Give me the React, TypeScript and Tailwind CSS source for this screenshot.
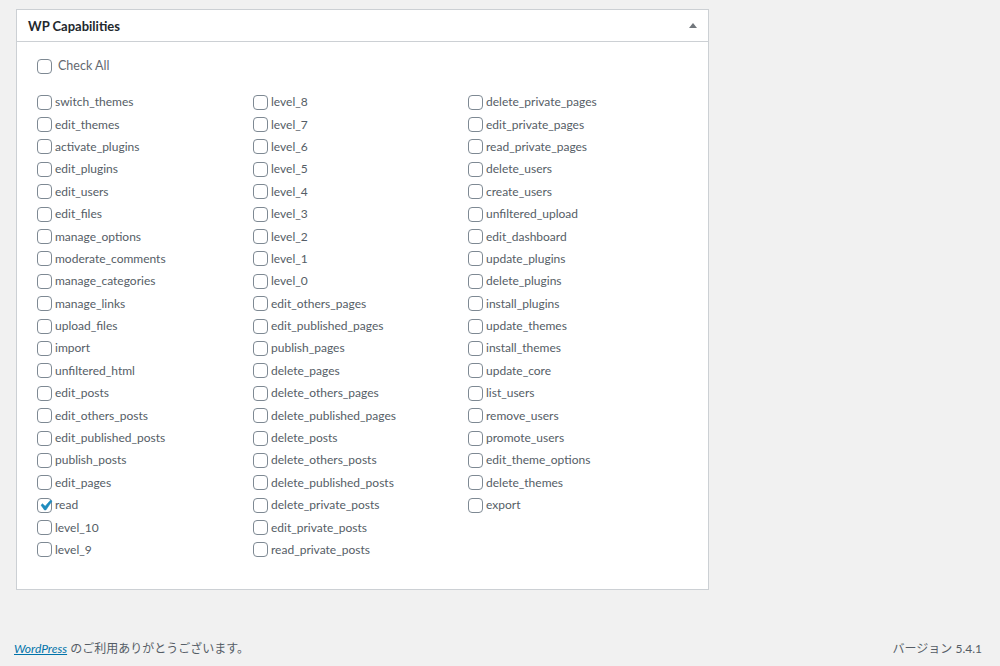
import { useState } from 'react';

const columns: string[][] = [
  [
    'switch_themes', 'edit_themes', 'activate_plugins', 'edit_plugins', 'edit_users', 'edit_files',
    'manage_options', 'moderate_comments', 'manage_categories', 'manage_links', 'upload_files', 'import',
    'unfiltered_html', 'edit_posts', 'edit_others_posts', 'edit_published_posts', 'publish_posts',
    'edit_pages', 'read', 'level_10', 'level_9',
  ],
  [
    'level_8', 'level_7', 'level_6', 'level_5', 'level_4', 'level_3', 'level_2', 'level_1', 'level_0',
    'edit_others_pages', 'edit_published_pages', 'publish_pages', 'delete_pages', 'delete_others_pages',
    'delete_published_pages', 'delete_posts', 'delete_others_posts', 'delete_published_posts',
    'delete_private_posts', 'edit_private_posts', 'read_private_posts',
  ],
  [
    'delete_private_pages', 'edit_private_pages', 'read_private_pages', 'delete_users', 'create_users',
    'unfiltered_upload', 'edit_dashboard', 'update_plugins', 'delete_plugins', 'install_plugins',
    'update_themes', 'install_themes', 'update_core', 'list_users', 'remove_users', 'promote_users',
    'edit_theme_options', 'delete_themes', 'export',
  ],
];

interface CheckboxProps {
  checked: boolean;
  onToggle: () => void;
  label: string;
  labelClass?: string;
}

const Checkbox = ({ checked, onToggle, label, labelClass }: CheckboxProps) => (
  <label className="flex h-[22.4px] cursor-pointer items-center gap-[3px]" onClick={onToggle}>
    {/* Box */}
    <span className="relative flex h-[15px] w-[15px] shrink-0 items-center justify-center rounded-[4px] border border-[#7e8993] bg-white">
      {checked && (
        <svg viewBox="0 0 20 20" className="absolute -left-[3px] -top-[4px] h-[21px] w-[21px]">
          <path
            d="M14.83 4.89l1.34.94-5.81 8.38H9.02L5.78 9.67l1.34-1.25 2.57 2.4z"
            fill="#1e8cbe"
            stroke="#1e8cbe"
            strokeWidth="0.6"
            strokeLinejoin="round"
          />
        </svg>
      )}
    </span>
    <span className={labelClass ?? 'text-[#555d66]'}>{label}</span>
  </label>
);

const App = () => {
  const [checked, setChecked] = useState<Record<string, boolean>>({ read: true });
  const toggle = (cap: string) => setChecked((prev) => ({ ...prev, [cap]: !prev[cap] }));

  return (
    <div
      className="flex min-h-[666px] flex-col bg-[#f1f1f1] text-[12px]"
      style={{ fontFamily: 'Lato, "Noto Sans CJK JP", sans-serif' }}
    >
      {/* Meta box */}
      <div className="ml-4 mt-[9px] w-[693px] border border-[#ccd0d4] bg-white">
        {/* Header */}
        <div className="flex h-8 items-center justify-between border-b border-[#ccd0d4] pl-[11px] pr-[11px] pt-[2px]">
          <h2 className="text-[13px] font-bold text-[#23282d]">WP Capabilities</h2>
          <svg viewBox="0 0 8 5" className="-mt-[2px] h-[5px] w-2">
            <path d="M4 0L8 5H0z" fill="#72777c" />
          </svg>
        </div>

        {/* Body */}
        <div className="pb-[28px] pl-5 pt-[13px]">
          <Checkbox
            checked={false}
            onToggle={() => {}}
            label="Check All"
            labelClass="ml-[3px] text-[12.5px] text-[#646970]"
          />
          <div className="mt-[13.6px] grid grid-cols-[216px_215px_1fr]">
            {columns.map((col, i) => (
              <div key={i} className="flex flex-col">
                {col.map((cap) => (
                  <Checkbox key={cap} checked={!!checked[cap]} onToggle={() => toggle(cap)} label={cap} />
                ))}
              </div>
            ))}
          </div>
        </div>
      </div>

      {/* Footer */}
      <div className="mt-auto flex items-center justify-between pb-[8px] pl-[14px] pr-[18px] text-[12px] text-[#555d66]">
        <p>
          <a href="#" className="italic text-[#0073aa] underline">
            WordPress
          </a>{' '}
          <span>のご利用ありがとうございます。</span>
        </p>
        <p>バージョン 5.4.1</p>
      </div>
    </div>
  );
};

export default App;
